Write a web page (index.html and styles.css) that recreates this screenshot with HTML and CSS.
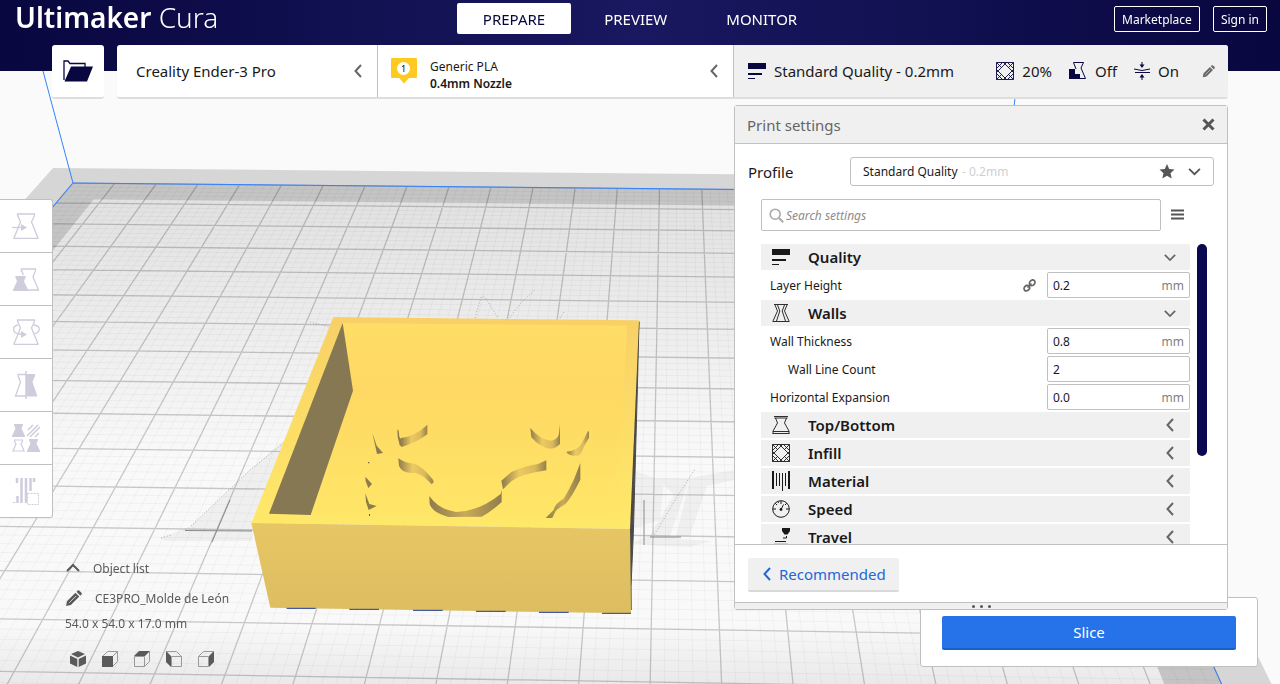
FILE: index.html
```
<!doctype html>
<html lang="en">
	<head>
		<meta charset="utf-8">
		<meta name="viewport" content="width=device-width, initial-scale=1.0">
		<title>Ultimaker Cura</title>
		<link rel="stylesheet" href="styles.css">
	</head>
	<body>
		<!-- Shared icons -->
		<svg class="defs" aria-hidden="true">
			<symbol id="i-left" viewBox="0 0 12 14"><path d="M9 1 3.500 7l5.500 6" fill="none" stroke="currentColor" stroke-width="2"/></symbol>
			<symbol id="i-down" viewBox="0 0 14 10"><path d="M1 2l6 6 6-6" fill="none" stroke="currentColor" stroke-width="2"/></symbol>
			<symbol id="i-quality" viewBox="0 0 18 18"><path d="M0 1h18v6H0zM0 11h14v2H0zM0 16h7v1H0z" fill="currentColor"/></symbol>
			<symbol id="i-infill" viewBox="0 0 18 18"><path d="M.5.5h17v17H.5zM.5 6.500 6.500.5M11.500.5l6 6M.5 11.500l6 6M17.500 11.500l-6 6M.5.5l5 5M17.500.5l-5 5M.5 17.500l5-5M17.500 17.500l-5-5M9 2l7 7-7 7-7-7zM9 2 7.500.5M9 2l1.500-1.500M9 16l-1.500 1.500M9 16l1.500 1.500M2 9 .5 7.500M2 9 .5 10.500M16 9l1.500-1.500M16 9l1.500 1.500" fill="none" stroke="currentColor" stroke-width=".9"/></symbol>
			<symbol id="i-pencil" viewBox="0 0 16 16"><path d="M1 15l.8-4.500 8-8 3.700 3.700-8 8zM10.800 1.600l1-1c.6-.5 1.200-.5 1.700 0l2 2c.5.5.5 1.100 0 1.700l-1 1z" fill="currentColor"/><path d="M4 12 10.500 5.500" stroke="#ddd" stroke-width=".8"/></symbol>
			<symbol id="i-spool" viewBox="0 0 26 26"><path d="M4.500 1h17v1.500L18.500 9 25 25v.5H1V25L7.500 9 4.500 2z" fill="none" stroke="currentColor" stroke-width="1.300"/></symbol>
			<symbol id="i-spool-fill" viewBox="0 0 26 26"><path d="M4 0h18v2l-3 7 7 15v2H0v-2L7 9 4 2z" fill="currentColor"/></symbol>
		</svg>

		<!-- Build plate and model -->
		<svg class="scene" viewBox="0 0 1280 684" preserveAspectRatio="xMidYMid slice" aria-hidden="true">
			<defs>
				<linearGradient id="plateFill" gradientUnits="userSpaceOnUse" x1="0" y1="183" x2="0" y2="684">
					<stop offset="0" stop-color="#e0e0e0"/>
					<stop offset=".25" stop-color="#ebebeb"/>
					<stop offset=".55" stop-color="#f9f9f9"/>
					<stop offset=".88" stop-color="#f9f9f9"/>
					<stop offset="1" stop-color="#e9e9e9"/>
				</linearGradient>
				<linearGradient id="rim" x1="0" y1="0" x2="0" y2="1">
					<stop offset="0" stop-color="#f8d066"/>
					<stop offset="1" stop-color="#ffe969"/>
				</linearGradient>
				<linearGradient id="inside" x1="0" y1="0" x2="0" y2="1">
					<stop offset="0" stop-color="#ffdd67"/>
					<stop offset=".35" stop-color="#fed863"/>
					<stop offset="1" stop-color="#ffe667"/>
				</linearGradient>
				<linearGradient id="front" x1="0" y1="0" x2="0" y2="1">
					<stop offset="0" stop-color="#e7c664"/>
					<stop offset="1" stop-color="#dcbd60"/>
				</linearGradient>
				<linearGradient id="cut" x1="0" y1="0" x2="1" y2="0">
					<stop offset="0" stop-color="#8d7b4c"/>
					<stop offset=".4" stop-color="#ecca61"/>
					<stop offset=".75" stop-color="#d9b95b"/>
					<stop offset="1" stop-color="#94814c"/>
				</linearGradient>
				<linearGradient id="cutDark" x1="0" y1="0" x2="1" y2="0">
					<stop offset="0" stop-color="#8d7b4c"/>
					<stop offset=".5" stop-color="#c9aa58"/>
					<stop offset="1" stop-color="#8f7d4c"/>
				</linearGradient>
			</defs>

			<polygon id="surround" fill="#d6d6d6"/>
			<polygon id="plate" fill="#c4c4c4"/>
			<polygon id="usable" fill="url(#plateFill)"/>
			<path id="minor" class="grid-minor"/>
			<path id="major" class="grid-major"/>

			<!-- Printed lettering on the plate -->
			<g class="decal">
				<path d="M161 538 191 526 250 470 283 441 290 441 252 520 252 541 165 541z"/>
				<path d="M632 470 664 481 660 520 629 530zM657 478l33 0-20 58 10 3 32 2-22 6-32-1-26-3 18-8 24-40zM690 478l44-8v10l-27 6-17 50-14 1z"/>
			</g>
			<g class="decal-line">
				<path d="M191 526 250 470 290 438M161 538l10-3M475 318l6-21 4 0 13 21M510 318q8-14 25-28M560 318l4-6M310 322l20 5M653 537l24-40 18-28"/>
			</g>
			<path d="M185 530.500 252 531M230 500 212 542M650 537h31M644 500v45" class="decal-dark"/>

			<path d="M43 71 73 183 1004 192" class="volume"/>
			<path d="M1015 98 1004 192" class="volume"/>
			<path id="volumeSides" class="volume"/>

			<!-- Model -->
			<g transform="translate(230 290) scale(.33333)">
				<path d="M1200 716 1227 95 1222 300 1210 730 1203 890 1203 960z" fill="#4b4a46" stroke="#4b4a46" stroke-width="3"/>
				<path d="M64 699 310 81 1227 91 1200 717z" fill="url(#rim)"/>
				<path d="M117 671 338 99 1191 107 1170 520 1166 690z" fill="url(#inside)"/>
				<path d="M338 99 369 302 242 675 117 671z" fill="#867852"/>
				<path d="M64 699 1200 717 1203 970 121 953z" fill="url(#front)"/>
				<path d="M170 955h87M358 958h89M549 961h89M738 964h89M927 967h89M1116 970h87" stroke="#1f3c96" stroke-width="3"/>
				<path d="M502 418l4 4 2 18 8 14v16l-7-4-6-26zM427 429l9 26 4 12 19 22-18 3-6-28zM406 560l20 22-11 12-8-20zM406 610l12 32 22 6-24 12-8-24z" fill="#8d7b4c"/>
				<path d="M512 444q40-4 76-36l4-4v29q-34 26-78 38z" fill="url(#cut)"/>
				<path d="M505 505q20 14 46 16 24 5 58 48l2 8-6 6q-36-38-58-34-32 0-40-22z" fill="url(#cut)"/>
				<path d="M901 414q28 34 60 38 24-2 26-22l3-28v60q-14 14-30 14-28-2-56-34z" fill="url(#cut)"/>
				<path d="M1010 485q32-4 44-24l20-38 3 2v18l-14 24q-12 32-22 30-24 2-31-10z" fill="url(#cut)"/>
				<path d="M949 511v30q-72 10-104 32l-26 25-5-26 30-26q38-18 80-24z" fill="url(#cut)"/>
				<path d="M598 618q28 40 80 48 70-2 134-54l3-12v36q-30 28-60 44l-100 1q-48-14-56-38z" fill="url(#cutDark)"/>
				<path d="M1051 519v50q-28 56-44 72-20 12-30 22l-10 21h-20l24-24q4-20 30-34 16-26 30-56z" fill="url(#cutDark)"/>
				<path d="M414 516h4v4h-4zM417 672h3v6h-3z" fill="#6f633f"/>
			</g>
		</svg>

		<div class="app">
			<header class="top">
				<h1 class="logo">Ultimaker <span>Cura</span></h1>
				<nav class="stages">
					<button class="stage active" type="button">PREPARE</button>
					<button class="stage" type="button">PREVIEW</button>
					<button class="stage" type="button">MONITOR</button>
				</nav>
				<div class="account">
					<button class="outline" type="button">Marketplace</button>
					<button class="outline" type="button">Sign in</button>
				</div>
			</header>

			<div class="stage-menu">
				<button class="open-file" type="button" aria-label="Open file">
					<svg width="30" height="22" viewBox="0 0 30 22"><path d="M1 20V1h4l2 2.500h15V7" fill="none" stroke="currentColor" stroke-width="1.300"/><path d="M8 6.500h22L24 21.500H1.500z" fill="currentColor"/></svg>
				</button>
				<div class="config">
					<button class="machine" type="button">
						<span>Creality Ender-3 Pro</span>
						<svg class="chev" width="12" height="14"><use href="#i-left"/></svg>
					</button>
					<button class="material" type="button">
						<svg width="26" height="26" viewBox="0 0 26 26"><path d="M1 0h24q1 0 1 1v18q0 1-1 1h-7l-5 5.500L8 20H1q-1 0-1-1V1q0-1 1-1z" fill="#ffc924"/><circle cx="12.500" cy="10.500" r="6.500" fill="#fff"/><text x="12.500" y="14" class="extruder-no">1</text></svg>
						<span class="material-text">Generic PLA<b>0.4mm Nozzle</b></span>
						<svg class="chev" width="12" height="14"><use href="#i-left"/></svg>
					</button>
					<div class="settings">
						<button class="summary" type="button">
							<svg width="18" height="18"><use href="#i-quality"/></svg>
							<span class="summary-name">Standard Quality - 0.2mm</span>
							<svg width="18" height="18"><use href="#i-infill"/></svg>
							<span class="summary-value">20%</span>
							<svg width="18" height="18" viewBox="0 0 18 18"><path d="M4.500.5h10L12 6l4.500 10.500H11M4.500.5 7 7" fill="none" stroke="currentColor"/><path d="M0 7h6v5h5v5H0z" fill="currentColor"/></svg>
							<span class="summary-value">Off</span>
							<svg width="16" height="18" viewBox="0 0 16 18"><path d="M8 0v4M8 14v4" stroke="currentColor"/><path d="M5.500 2.500h5L8 6zM5.500 15.500h5L8 12z" fill="currentColor"/><path d="M0 7q8 3 16 0M1 10.500h15" fill="none" stroke="currentColor"/></svg>
							<span class="summary-value">On</span>
							<svg class="edit" width="13" height="13"><use href="#i-pencil"/></svg>
						</button>

						<section class="panel">
							<div class="panel-head">
								<h2>Print settings</h2>
								<button class="close" type="button" aria-label="Close"><svg width="13" height="13" viewBox="0 0 13 13"><path d="M1.500 1.500l10 10M11.500 1.500l-10 10" stroke="currentColor" stroke-width="3"/></svg></button>
							</div>

							<div class="profile">
								<label for="profile">Profile</label>
								<div class="profile-box">
									<select id="profile"><option>Standard Quality</option></select>
									<span class="profile-hint">- 0.2mm</span>
									<svg class="star" width="16" height="15" viewBox="0 0 16 15"><path d="M8 0l2.200 5 5.300.6-4 3.600 1.200 5.400L8 11.800l-4.700 2.800 1.200-5.400-4-3.600L5.800 5z" fill="currentColor"/></svg>
									<svg width="13" height="9"><use href="#i-down"/></svg>
								</div>
							</div>

							<div class="search">
								<div class="search-box">
									<svg width="15" height="15" viewBox="0 0 15 15"><circle cx="6.200" cy="6.200" r="5" fill="none" stroke="currentColor" stroke-width="1.600"/><path d="M10 10l4.200 4.200" stroke="currentColor" stroke-width="2"/></svg>
									<input type="text" placeholder="Search settings" aria-label="Search settings">
								</div>
								<button class="menu" type="button" aria-label="Setting visibility"><svg width="13" height="12" viewBox="0 0 13 12"><path d="M0 1.500h13M0 5.500h13M0 9.500h13" stroke="currentColor" stroke-width="2"/></svg></button>
							</div>

							<div class="list-wrap">
								<div class="list">
									<button class="category" type="button"><svg width="18" height="18"><use href="#i-quality"/></svg><span>Quality</span><svg class="chev" width="12" height="9"><use href="#i-down"/></svg></button>
									<div class="setting">
										<label for="layer">Layer Height</label>
										<svg class="link" width="13" height="13" viewBox="0 0 13 13"><g fill="none" stroke="currentColor" stroke-width="1.700"><ellipse cx="3.800" cy="9.200" rx="3" ry="2.500" transform="rotate(-45 3.800 9.200)"/><ellipse cx="9.200" cy="3.800" rx="3" ry="2.500" transform="rotate(-45 9.200 3.800)"/><path d="M4.500 8.500l4-4"/></g></svg>
										<span class="value"><input id="layer" type="text" value="0.2"><span>mm</span></span>
									</div>
									<button class="category" type="button"><svg width="18" height="18" viewBox="0 0 18 18"><path d="M2 .5h14M.5 17.500h17M3 1l2.500 6L1 17M15 1l-2.500 6L17 17M5.500 1l2.300 6L4.500 17M12.500 1l-2.300 6 3.300 10" fill="none" stroke="currentColor" stroke-width=".9"/></svg><span>Walls</span><svg class="chev" width="12" height="9"><use href="#i-down"/></svg></button>
									<div class="setting">
										<label for="wall">Wall Thickness</label>
										<span class="value"><input id="wall" type="text" value="0.8"><span>mm</span></span>
									</div>
									<div class="setting child">
										<label for="lines">Wall Line Count</label>
										<span class="value"><input id="lines" type="text" value="2"></span>
									</div>
									<div class="setting">
										<label for="expansion">Horizontal Expansion</label>
										<span class="value"><input id="expansion" type="text" value="0.0"><span>mm</span></span>
									</div>
									<button class="category" type="button"><svg width="18" height="18" viewBox="0 0 18 18"><path d="M2 .5h14M2.500 2h13M.5 17.500h17M1 15.500h16M3.500 2l2 5L1 15v2.500M14.500 2l-2 5L17 15v2.500" fill="none" stroke="currentColor" stroke-width=".9"/></svg><span>Top/Bottom</span><svg class="chev" width="12" height="14"><use href="#i-left"/></svg></button>
									<button class="category" type="button"><svg width="18" height="18"><use href="#i-infill"/></svg><span>Infill</span><svg class="chev" width="12" height="14"><use href="#i-left"/></svg></button>
									<button class="category" type="button"><svg width="18" height="20" viewBox="0 0 18 20"><path d="M1 0v18M17 0v18" stroke="currentColor" stroke-width="2"/><path d="M4.500 2v13M7.500 2v13M10.500 2v18M13.500 2v13" stroke="currentColor"/></svg><span>Material</span><svg class="chev" width="12" height="14"><use href="#i-left"/></svg></button>
									<button class="category" type="button"><svg width="18" height="18" viewBox="0 0 18 18"><circle cx="9" cy="9" r="8.300" fill="none" stroke="currentColor"/><circle cx="9" cy="9.500" r="1.400" fill="currentColor"/><path d="M9 9.500l2.500-5M9 1v3M1 9h3M14 9h3M3.300 3.300l1.700 1.700M14.700 3.300 13 5M5.800 1.500 6.500 3" stroke="currentColor"/></svg><span>Speed</span><svg class="chev" width="12" height="14"><use href="#i-left"/></svg></button>
									<button class="category" type="button"><svg width="18" height="18" viewBox="0 0 18 18"><path d="M10 0h8v3l-2.500 3.500h-3L10 3z" fill="currentColor"/><path d="M14.500 8v2H11M3 13.500h11" fill="none" stroke="currentColor"/><path d="M2 16.500h14" stroke="#aaa" stroke-width="2"/></svg><span>Travel</span><svg class="chev" width="12" height="14"><use href="#i-left"/></svg></button>
								</div>
								<div class="scrollbar"></div>
							</div>

							<div class="panel-foot">
								<button class="recommended" type="button"><svg width="12" height="14"><use href="#i-left"/></svg>Recommended</button>
							</div>
							<div class="drag"><i></i><i></i><i></i></div>
						</section>
					</div>
				</div>
			</div>

			<main class="workspace">
				<div class="tools">
					<button type="button" aria-label="Move" disabled><svg width="28" height="28" viewBox="0 0 28 28"><use href="#i-spool" x="1" y="1" width="26" height="26"/><path d="M0 15.500h11" stroke="currentColor" stroke-width="1.300"/><path d="M9 12l6 3.500L9 19z" fill="currentColor"/></svg></button>
					<button type="button" aria-label="Scale" disabled><svg width="28" height="28" viewBox="0 0 28 28"><path d="M9.500 7V4h14v1.500L21 12l5.500 13H14M9 4l2.500 6" fill="none" stroke="currentColor" stroke-width="1.300"/><use href="#i-spool-fill" x="1" y="11" width="15" height="15"/></svg></button>
					<button type="button" aria-label="Rotate" disabled><svg width="28" height="28" viewBox="0 0 28 28"><use href="#i-spool" x="1" y="1" width="26" height="26"/><path d="M6 7C0 8 0 15 7 16h4M22 7c7 1 7 7 0 9" fill="none" stroke="currentColor" stroke-width="1.300"/><path d="M9 13l6 3.500L9 20z" fill="currentColor"/></svg></button>
					<button type="button" aria-label="Mirror" disabled><svg width="28" height="28" viewBox="0 0 28 28"><path d="M14 3.500H6v1.300L8.500 11 3.500 25H14" fill="none" stroke="currentColor" stroke-width="1.300"/><path d="M14 3h9v2l-2.500 6 5 14.500H14z" fill="currentColor"/><path d="M14 0v28" stroke="currentColor" stroke-width="1.500"/></svg></button>
					<button type="button" aria-label="Per model settings" disabled><svg width="28" height="28" viewBox="0 0 28 28"><use href="#i-spool-fill" x="0" y="0" width="13" height="13"/><path d="M16 6l5-5M15 12 26 1M18 13 28 3M23 13l4-4" stroke="currentColor" stroke-width="1.500"/><path d="M2.500 16h8v1.500L9 20l3 7H1l3-7-1.500-2.500z" fill="none" stroke="currentColor" stroke-width="1.200"/><use href="#i-spool-fill" x="15" y="15" width="13" height="13"/></svg></button>
					<button type="button" aria-label="Support blocker" disabled><svg width="28" height="28" viewBox="0 0 28 28"><path d="M5 1v5M9.500 1v25M14 1v25M18.500 1v13M22 1v4M2 25v1M5.500 19v7" stroke="currentColor" stroke-width="2.500"/><path d="M15.500 16.500h11v11h-11z" fill="#fff" stroke="currentColor" stroke-dasharray="2 1"/></svg></button>
				</div>

				<div class="bottom">
					<div class="objects">
						<button class="object-toggle" type="button"><svg width="14" height="10" viewBox="0 0 14 10"><path d="M1 8l6-6 6 6" fill="none" stroke="currentColor" stroke-width="2"/></svg>Object list</button>
						<button class="object-name" type="button"><svg width="17" height="17"><use href="#i-pencil"/></svg>CE3PRO_Molde de León</button>
						<p class="size">54.0 x 54.0 x 17.0 mm</p>
						<div class="views">
							<button type="button" aria-label="3D view"><svg width="16" height="16" viewBox="0 0 16 16"><path d="M8 0l7 3-7 3.500L1 3zM0 4.500l7.300 3.400V16L0 12.500zM16 4.500 8.700 7.900V16l7.300-3.500z" fill="currentColor"/></svg></button>
							<button type="button" aria-label="Front view"><svg width="16" height="16" viewBox="0 0 16 16"><path d="M.5 5.500l5-5h10v10l-5 5h-10zM11 5l4.500-4.500" fill="none" stroke="#999"/><path d="M0 5h11v11H0z" fill="currentColor"/></svg></button>
							<button type="button" aria-label="Top view"><svg width="16" height="16" viewBox="0 0 16 16"><path d="M.5 5.500h10v10H.5zM10.500 15.500l5-5V.500" fill="none" stroke="#999"/><path d="M0 5l5-5h11l-5 5z" fill="currentColor"/></svg></button>
							<button type="button" aria-label="Left view"><svg width="16" height="16" viewBox="0 0 16 16"><path d="M5.500 5.500h10v10h-10zM.5.500h10l5 5" fill="none" stroke="#999"/><path d="M0 0l5 5v11l-5-5z" fill="currentColor"/></svg></button>
							<button type="button" aria-label="Right view"><svg width="16" height="16" viewBox="0 0 16 16"><path d="M.5 5.500h10v10H.5zM.5 5.500l5-5h10" fill="none" stroke="#999"/><path d="M11 5l5-5v11l-5 5z" fill="currentColor"/></svg></button>
						</div>
					</div>
					<div class="action">
						<button class="slice" type="button">Slice</button>
					</div>
				</div>
			</main>
		</div>
		<script src="scene.js"></script>
	</body>
</html>
```
FILE: styles.css
```
* {
	box-sizing: border-box;
}
body {
	margin: 0;
	font-family: "Noto Sans", "Open Sans", sans-serif;
	font-size: 12px;
	color: #191919;
	background-color: #fafafa;
	overflow: hidden;
}
button, input, select {
	font: inherit;
	color: inherit;
	background: none;
	border: none;
	margin: 0;
	padding: 0;
}
button {
	cursor: pointer;
}
svg {
	display: block;
	flex: none;
}
h1, h2, p {
	margin: 0;
	font-weight: normal;
}
.defs {
	position: absolute;
	width: 0;
	height: 0;
}

/* 3D view, sits under everything */
.scene {
	position: fixed;
	width: 100%;
	height: 100%;
}
.grid-minor, .grid-major, .volume, .decal-line, .decal-dark {
	fill: none;
}
.grid-minor {
	stroke: rgba(0,0,0,0.035);
}
.grid-major {
	stroke: rgba(0,0,0,0.2);
	stroke-width: 1.3;
}
.volume {
	stroke: #3282ff;
}
.decal {
	fill: rgba(0,0,0,0.04);
}
.decal-line {
	stroke: #aaa;
	stroke-dasharray: 1 2;
}
.decal-dark {
	stroke: #8a8a8a;
}

.app {
	position: relative;
	display: flex;
	flex-direction: column;
	height: 100vh;
}

/* Header */
.top {
	display: grid;
	grid-template-columns: 1fr auto 1fr;
	align-items: start;
	height: 71px;
	padding: 3px 15px 0;
	color: #fff;
	background: linear-gradient(90deg, #08073f, #191860 50%, #08073f);
}
.logo {
	font-size: 28px;
	font-weight: 600;
	line-height: 29px;
}
.logo span {
	font-weight: 300;
}
.stages {
	display: flex;
	gap: 7px;
}
.stage {
	padding: 0 26px;
	height: 31px;
	font-size: 15px;
	border-radius: 2px;
}
.stage.active {
	color: #08073f;
	background-color: #fff;
}
.account {
	display: flex;
	justify-content: flex-end;
	gap: 13px;
	padding-top: 3px;
	margin-right: -2px;
}
.outline {
	height: 26px;
	padding: 0 7px;
	border: 1px solid #fff;
	border-radius: 2px;
}

/* Stage menu */
.stage-menu {
	position: relative;
	z-index: 2;
	display: flex;
	gap: 13px;
	margin: -26px 52px 0;
	font-size: 15px;
}
.open-file, .config {
	height: 54px;
	background-color: #fff;
	border-bottom: 2px solid #dedede;
	border-radius: 3px;
}
.open-file {
	display: flex;
	align-items: center;
	justify-content: center;
	width: 52px;
	color: #08073f;
}
.config {
	flex: 1;
	display: grid;
	grid-template-columns: 260fr 356fr 495fr;
}
.machine, .material, .summary {
	display: flex;
	align-items: center;
	height: 100%;
	text-align: left;
}
.chev {
	margin-left: auto;
	color: #666;
}
.machine {
	padding: 0 13px 0 19px;
}
.material {
	gap: 13px;
	padding: 0 13px;
	border-left: 1px solid #c0c0c0;
	font-size: 12px;
	line-height: 17px;
}
.material-text {
	padding-top: 8px;
}
.material-text b {
	display: block;
	font-weight: 600;
}
.extruder-no {
	font-size: 9px;
	text-anchor: middle;
}
.settings {
	position: relative;
	min-width: 0;
	border-left: 1px solid #c0c0c0;
	background-color: #f0f0f0;
	border-radius: 0 3px 3px 0;
}
.summary {
	width: 100%;
	gap: 8px;
	padding: 0 13px 0 14px;
	color: #08073f;
}
.summary span {
	color: #191919;
}
.summary-name {
	flex: 1;
}
.summary-value {
	margin-right: 9px;
}
.edit {
	margin-left: 6px;
	color: #666;
}

/* Print settings panel */
.panel {
	position: absolute;
	top: 60px;
	left: 0;
	right: 0;
	background-color: #fff;
	border: 1px solid #c0c0c0;
	border-radius: 3px;
	font-size: 12px;
}
.panel-head {
	display: flex;
	align-items: center;
	justify-content: space-between;
	height: 38px;
	padding: 0 12px;
	background-color: #f0f0f0;
	border-bottom: 1px solid #c0c0c0;
}
.panel-head h2 {
	font-size: 15px;
	color: #666;
}
.close, .menu {
	color: #555;
}
.profile {
	display: flex;
	align-items: center;
	justify-content: space-between;
	height: 55px;
	padding: 0 13px;
}
.profile label {
	font-size: 15px;
}
.profile-box {
	display: flex;
	align-items: center;
	width: 364px;
	height: 29px;
	padding: 0 12px;
	color: #555;
	border: 1px solid #c0c0c0;
	border-radius: 3px;
}
.profile-box select {
	appearance: none;
	color: #191919;
}
.profile-hint {
	margin-left: 4px;
	color: #d0d0d0;
}
.star {
	margin: 0 13px 0 auto;
}
.search {
	display: flex;
	align-items: center;
	gap: 10px;
	padding-left: 26px;
}
.search-box {
	display: flex;
	align-items: center;
	gap: 2px;
	width: 400px;
	height: 32px;
	padding: 1px 0 0 7px;
	color: #aaa;
	border: 1px solid #c0c0c0;
	border-radius: 2px;
}
.search-box input {
	flex: 1;
	outline: none;
	color: #191919;
}
.search-box input::placeholder {
	font-style: italic;
	color: #8c8c8c;
}
.list-wrap {
	display: flex;
	gap: 7px;
	height: 300px;
	margin-top: 13px;
	padding: 0 20px 0 26px;
	overflow: hidden;
}
.list {
	flex: 1;
	display: flex;
	flex-direction: column;
	gap: 2px;
}
.category {
	flex: none;
	display: flex;
	align-items: center;
	height: 26px;
	padding: 0 14px 0 11px;
	background-color: #f0f0f0;
	font-size: 15px;
	font-weight: 600;
	line-height: 20px;
}
.category span {
	margin-left: 18px;
}
.setting {
	flex: none;
	display: flex;
	align-items: center;
	height: 26px;
	padding-left: 9px;
}
.setting.child {
	padding-left: 27px;
}
.setting label {
	flex: 1;
}
.link {
	margin-right: 11px;
	color: #666;
}
.value {
	display: flex;
	align-items: center;
	width: 143px;
	height: 26px;
	padding: 0 5px;
	border: 1px solid #c0c0c0;
	border-radius: 2px;
}
.value input {
	flex: 1;
	min-width: 0;
	outline: none;
}
.value span {
	color: #808080;
}
.scrollbar {
	width: 10px;
	height: 212px;
	border-radius: 5px;
	background-color: #0a0850;
}
.panel-foot {
	padding: 13px;
	height: 58px;
	border-top: 1px solid #c0c0c0;
}
.recommended {
	display: flex;
	align-items: center;
	gap: 6px;
	height: 34px;
	padding: 0 13px;
	font-size: 15px;
	color: #2068d8;
	background-color: #f0f0f0;
	border-bottom: 2px solid #d8d8d8;
	border-radius: 2px;
}
.drag {
	display: flex;
	align-items: center;
	justify-content: center;
	gap: 5px;
	height: 7px;
	background-color: #f0f0f0;
	border-top: 1px solid #c0c0c0;
}
.drag i {
	width: 3px;
	height: 3px;
	border-radius: 50%;
	background-color: #555;
}

/* Left tools and bottom row */
.workspace {
	flex: 1;
	display: flex;
	flex-direction: column;
	justify-content: space-between;
	align-items: flex-start;
	padding-top: 100px;
}
.tools {
	width: 53px;
	border: 1px solid #c0c0c0;
	border-left: none;
	border-radius: 0 3px 3px 0;
	background-color: #fff;
}
.tools button {
	display: flex;
	align-items: center;
	justify-content: center;
	width: 52px;
	height: 52px;
	color: #cfccdc;
}
.tools button + button {
	height: 53px;
	border-top: 1px solid #c0c0c0;
}
.bottom {
	display: flex;
	justify-content: space-between;
	align-items: flex-end;
	width: 100%;
	padding: 0 22px 17px 65px;
	color: #5a5a5a;
}
.objects {
	display: flex;
	flex-direction: column;
	align-items: flex-start;
}
.object-toggle, .object-name {
	display: flex;
	align-items: center;
	gap: 13px;
	height: 20px;
	margin-bottom: 10px;
}
.object-toggle {
	padding-left: 1px;
}
.object-name {
	margin-bottom: 6px;
}
.size {
	line-height: 20px;
}
.views {
	display: flex;
	gap: 16px;
	padding: 17px 0 0 5px;
}
.action {
	width: 338px;
	padding: 18px 21px 16px;
	background-color: #fff;
	border: 1px solid #c0c0c0;
	border-radius: 3px;
}
.slice {
	width: 100%;
	height: 34px;
	font-size: 15px;
	color: #fff;
	background-color: #2672e8;
	border-bottom: 2px solid #1b5fc8;
	border-radius: 2px;
}
```
FILE: scene.js
```
// Build plate is 22 x 22 cells, (0,0) is the back left corner
var CELLS = 22;
var VP_X = 673;
var VP_Y = -528;

function project(i, j) {
	var d = 1 / (1 - 0.02718 * j);
	var dx = (73 + 41.9 * i - VP_X) * d;
	var tilt = 1 + 0.0000136 * (dx + VP_X - 53);
	return (VP_X + dx * tilt).toFixed(1) + "," + (VP_Y + 711 * d * tilt).toFixed(1);
}

function line(i1, j1, i2, j2) {
	return "M" + project(i1, j1) + "L" + project(i2, j2);
}

function rect(id, i1, j1, i2, j2) {
	var points = [project(i1, j1), project(i2, j1), project(i2, j2), project(i1, j2)];
	document.getElementById(id).setAttribute("points", points.join(" "));
}

rect("surround", -0.8, -0.8, CELLS + 0.7, CELLS);
rect("plate", 0, 0, CELLS, CELLS);
rect("usable", 0.8, 0.8, CELLS - 0.8, CELLS - 0.8);

var major = "";
var minor = "";
for (var n = 0; n <= CELLS * 5; n++) {
	var p = n / 5;
	var path = line(p, 0, p, CELLS) + line(0, p, CELLS, p);
	if (n % 5 == 0) {
		major += path;
	} else {
		minor += path;
	}
}
document.getElementById("major").setAttribute("d", major);
document.getElementById("minor").setAttribute("d", minor);
document.getElementById("volumeSides").setAttribute("d", line(0, 0, 0, CELLS) + line(CELLS, 0, CELLS, CELLS));
```
